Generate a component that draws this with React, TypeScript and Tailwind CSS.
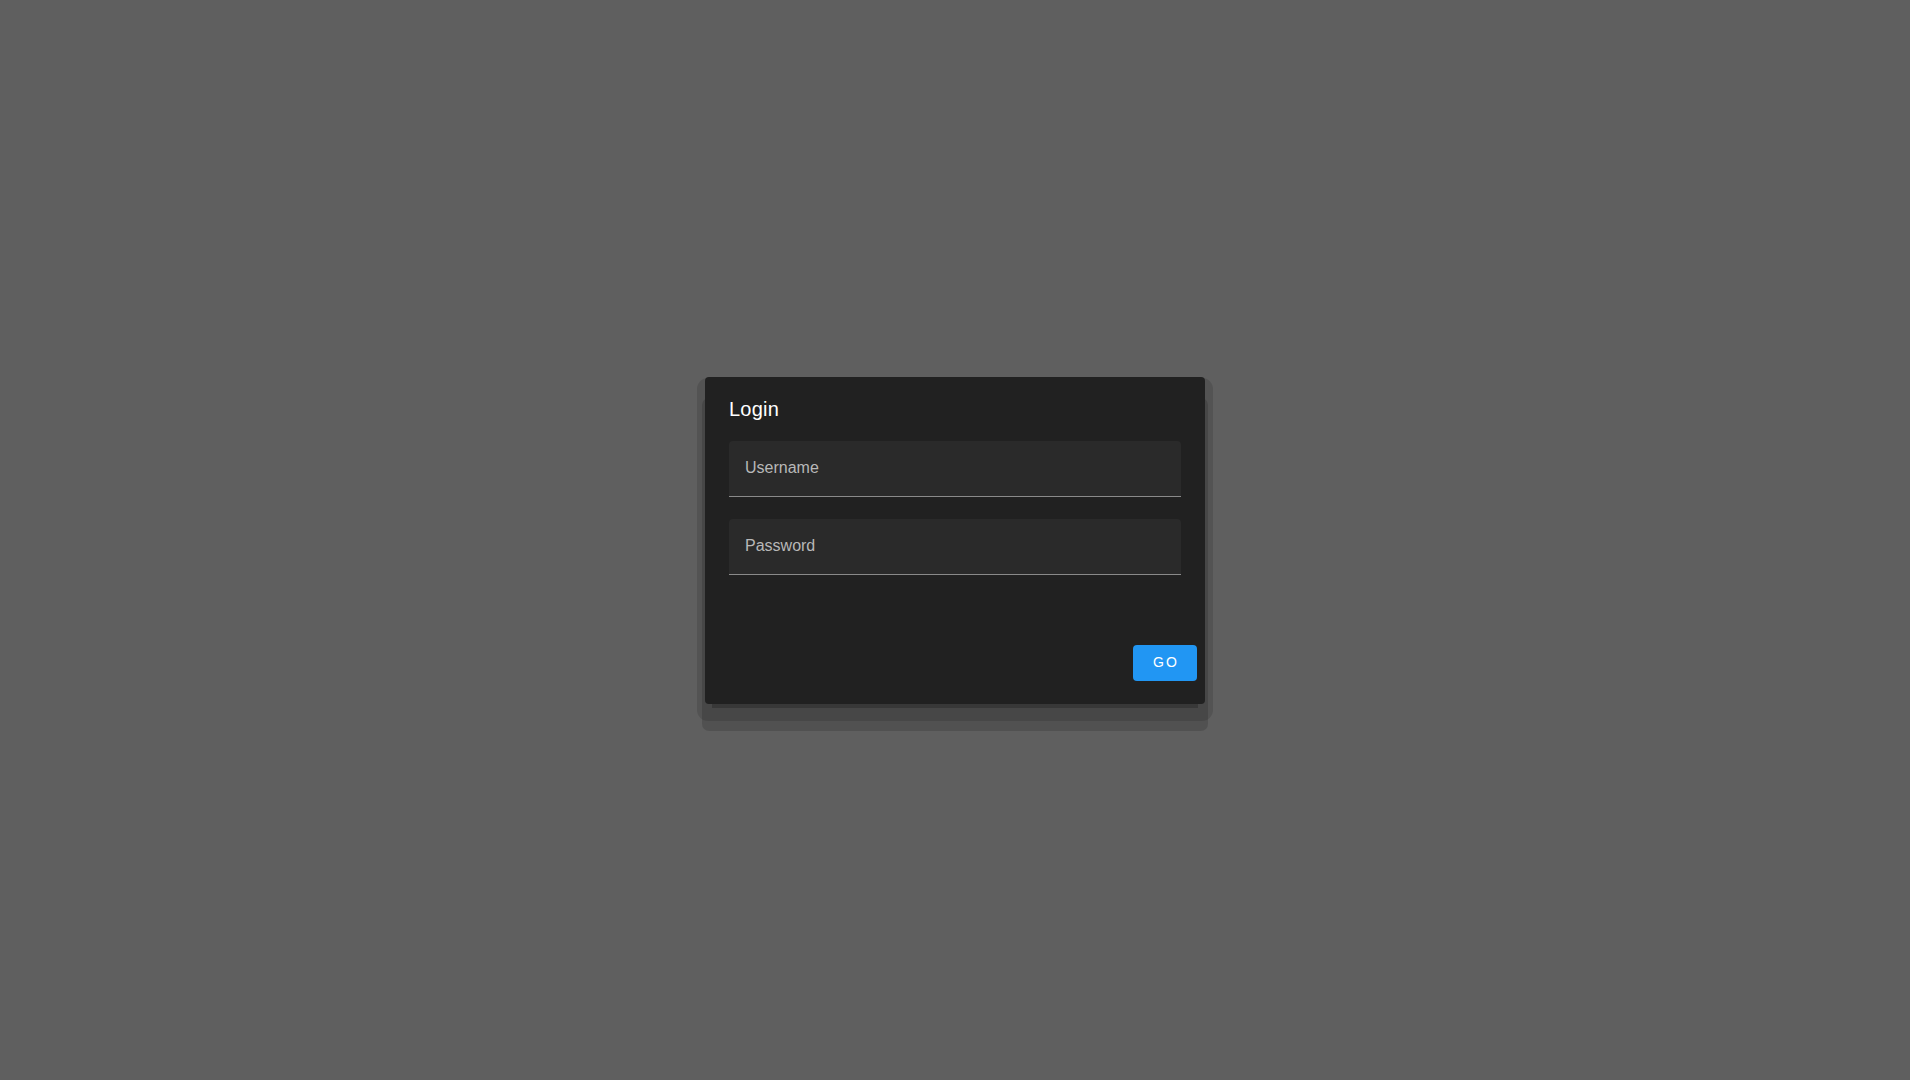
import React from "react";

const fields = ["Username", "Password"];

const LoginDialog: React.FC = () => {
    return (
        <div
            className="w-[500px] flex flex-col bg-[#212121] rounded-[4px] shadow-[0_11px_0_-7px_rgba(0,0,0,0.2),0_24px_0_3px_rgba(0,0,0,0.14),0_9px_0_8px_rgba(0,0,0,0.12)]"
        >
            {/* title */}
            <div className="pt-4 px-6 h-12 text-[20px] leading-8 text-white tracking-[0.0125em]">
                Login
            </div>

            {/* fields */}
            <div className="mt-4 px-6 flex flex-col gap-[22px]">
                {fields.map((label) => (
                    <div
                        key={label}
                        className="h-14 flex items-center px-4 bg-[#2a2a2a] rounded-t-[4px] border-b border-[#8a8a8a]"
                    >
                        <span className="text-[16px] text-[#b8b8b8]">{label}</span>
                    </div>
                ))}
            </div>

            {/* actions */}
            <div className="flex justify-end pr-2 pt-[70px] pb-[23px]">
                <button
                    className="h-9 w-16 rounded-[4px] bg-[#2196f3] text-white text-[14px] font-normal uppercase tracking-[0.15em] pl-[2px]"
                >
                    Go
                </button>
            </div>
        </div>
    );
};

export default function App() {
    return (
        <div className="w-full h-screen flex" style={{fontFamily: '"Liberation Sans", Arial, sans-serif'}}>
            <div className="flex-1 flex items-center justify-center bg-[#5f5f5f]">
                <LoginDialog/>
            </div>
            <div className="w-[10px] bg-white"/>
        </div>
    );
}
